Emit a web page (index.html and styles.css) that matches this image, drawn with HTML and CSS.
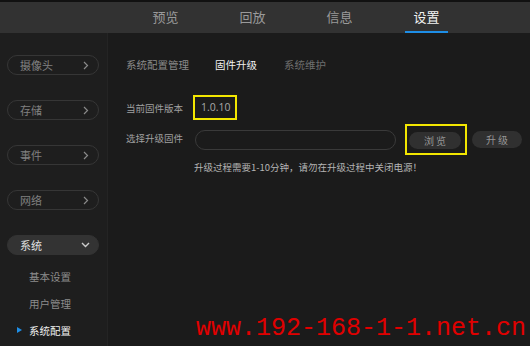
FILE: index.html
```html
<!DOCTYPE html>
<html>
<head>
    <title>设置</title>
    <meta charset="UTF-8">
    <link rel="stylesheet" href="styles.css">
</head>
<body>
    <!-- barre du haut -->
    <div class="topbar">
        <div class="tab">预览</div>
        <div class="tab">回放</div>
        <div class="tab">信息</div>
        <div class="tab active">设置</div>
    </div>

    <div class="main">
        <!-- menu de gauche -->
        <div class="sidebar">
            <div class="pill"><span>摄像头</span><svg width="6" height="9" viewBox="0 0 6 9"><path d="M1 1 L4.5 4.5 L1 8" fill="none" stroke="#8a8a8a" stroke-width="1.2"/></svg></div>
            <div class="pill"><span>存储</span><svg width="6" height="9" viewBox="0 0 6 9"><path d="M1 1 L4.5 4.5 L1 8" fill="none" stroke="#8a8a8a" stroke-width="1.2"/></svg></div>
            <div class="pill"><span>事件</span><svg width="6" height="9" viewBox="0 0 6 9"><path d="M1 1 L4.5 4.5 L1 8" fill="none" stroke="#8a8a8a" stroke-width="1.2"/></svg></div>
            <div class="pill"><span>网络</span><svg width="6" height="9" viewBox="0 0 6 9"><path d="M1 1 L4.5 4.5 L1 8" fill="none" stroke="#8a8a8a" stroke-width="1.2"/></svg></div>
            <div class="pill open">
                <span>系统</span>
                <svg width="9" height="6" viewBox="0 0 9 6"><path d="M1 1 L4.5 4.5 L8 1" fill="none" stroke="#ccc" stroke-width="1.4"/></svg>
            </div>
            <div class="sub">基本设置</div>
            <div class="sub">用户管理</div>
            <div class="sub current">系统配置</div>
        </div>

        <!-- contenu -->
        <div class="content">
            <div class="subtabs">
                <span>系统配置管理</span>
                <span class="on">固件升级</span>
                <span class="dim">系统维护</span>
            </div>

            <div class="row version">
                <div class="label">当前固件版本</div>
                <div class="mark value">1.0.10</div>
            </div>

            <div class="row">
                <div class="label">选择升级固件</div>
                <div class="file"></div>
                <div class="mark browse"><div class="btn">浏 览</div></div>
                <div class="btn up">升 级</div>
            </div>

            <div class="note">升级过程需要1-10分钟，请勿在升级过程中关闭电源！</div>
        </div>
    </div>

    <div class="watermark">www.192-168-1-1.net.cn</div>
</body>
</html>
```

FILE: styles.css
```css
body {
    margin: 0;
    width: 530px;
    height: 346px;
    overflow: hidden;
    background: #1b1b1b;
    font-family: "Noto Sans CJK SC", "Liberation Sans", sans-serif;
    position: relative;
}
.topbar {
    height: 31px;
    border-top: 2px solid #111;
    background: #323232;
    display: flex;
    padding-left: 122px;
}
.tab {
    width: 87px;
    text-align: center;
    color: #9a9a9a;
    font-size: 13px;
    line-height: 30px;
    position: relative;
}
.tab.active {
    color: #f2f2f2;
}
.tab.active:after {
    content: "";
    position: absolute;
    left: 22px;
    right: 22px;
    bottom: 0;
    height: 2px;
    background: #1e8ee6;
}
.main {
    display: flex;
    height: 313px;
}
.sidebar {
    width: 108px;
    background: #1e1e1e;
    border-right: 1px solid #242424;
    padding-top: 22px;
    box-sizing: border-box;
}
.pill {
    margin: 0 0 25px 7px;
    width: 92px;
    height: 20px;
    box-sizing: border-box;
    border: 1px solid #363636;
    border-radius: 10px;
    display: flex;
    align-items: center;
    justify-content: space-between;
    padding: 0 9px 0 12px;
    color: #808080;
    font-size: 11px;
}
.pill.open {
    margin-top: 4px;
    margin-bottom: 8px;
    background: #333;
    border-color: #333;
    color: #e0e0e0;
    padding-right: 8px;
}
.sub {
    height: 27px;
    line-height: 27px;
    padding-left: 29px;
    color: #8c8c8c;
    font-size: 10.5px;
    position: relative;
}
.sub.current {
    color: #f0f0f0;
}
.sub.current:before {
    content: "";
    position: absolute;
    left: 17px;
    top: 10px;
    border-left: 5px solid #1e8ee6;
    border-top: 3.5px solid transparent;
    border-bottom: 3.5px solid transparent;
}
.content {
    flex: 1;
    padding: 24px 0 0 18px;
}
.subtabs {
    display: flex;
    gap: 26px;
    font-size: 10.5px;
    color: #8a8a8a;
    height: 16px;
    line-height: 16px;
}
.subtabs .on {
    color: #f0f0f0;
}
.subtabs .dim {
    color: #6e6e6e;
    margin-left: 1px;
}
.row {
    display: flex;
    align-items: center;
}
.version {
    margin-top: 22px;
}
.label {
    width: 67px;
    font-size: 9.5px;
    color: #a0a0a0;
}
.mark {
    border: 2px solid #f2e600;
    box-sizing: border-box;
}
.value {
    width: 44px;
    height: 25px;
    line-height: 21px;
    padding-left: 6px;
    font-family: "Open Sans", "Liberation Sans", sans-serif;
    font-size: 10.5px;
    color: #a8a8a8;
}
.file {
    margin: 4px 0 0 2px;
    width: 201px;
    height: 20px;
    box-sizing: border-box;
    border: 1px solid #3a3a3a;
    border-radius: 10px;
}
.browse {
    margin: 4px 0 0 9px;
    width: 62px;
    height: 31px;
    display: flex;
    align-items: center;
    padding: 2px 0 0 2px;
}
.btn {
    width: 52px;
    height: 17px;
    line-height: 17px;
    border-radius: 9px;
    background: #303030;
    color: #959595;
    font-size: 10px;
    text-align: center;
}
.btn.up {
    margin: 4px 0 0 5px;
    width: 50px;
}
.note {
    margin: 5px 0 0 68px;
    font-size: 9.5px;
    color: #b4b4b4;
}
.watermark {
    position: absolute;
    left: 196px;
    top: 314px;
    font-family: "Liberation Mono", monospace;
    font-size: 25px;
    color: #e00000;
    white-space: nowrap;
}
```
